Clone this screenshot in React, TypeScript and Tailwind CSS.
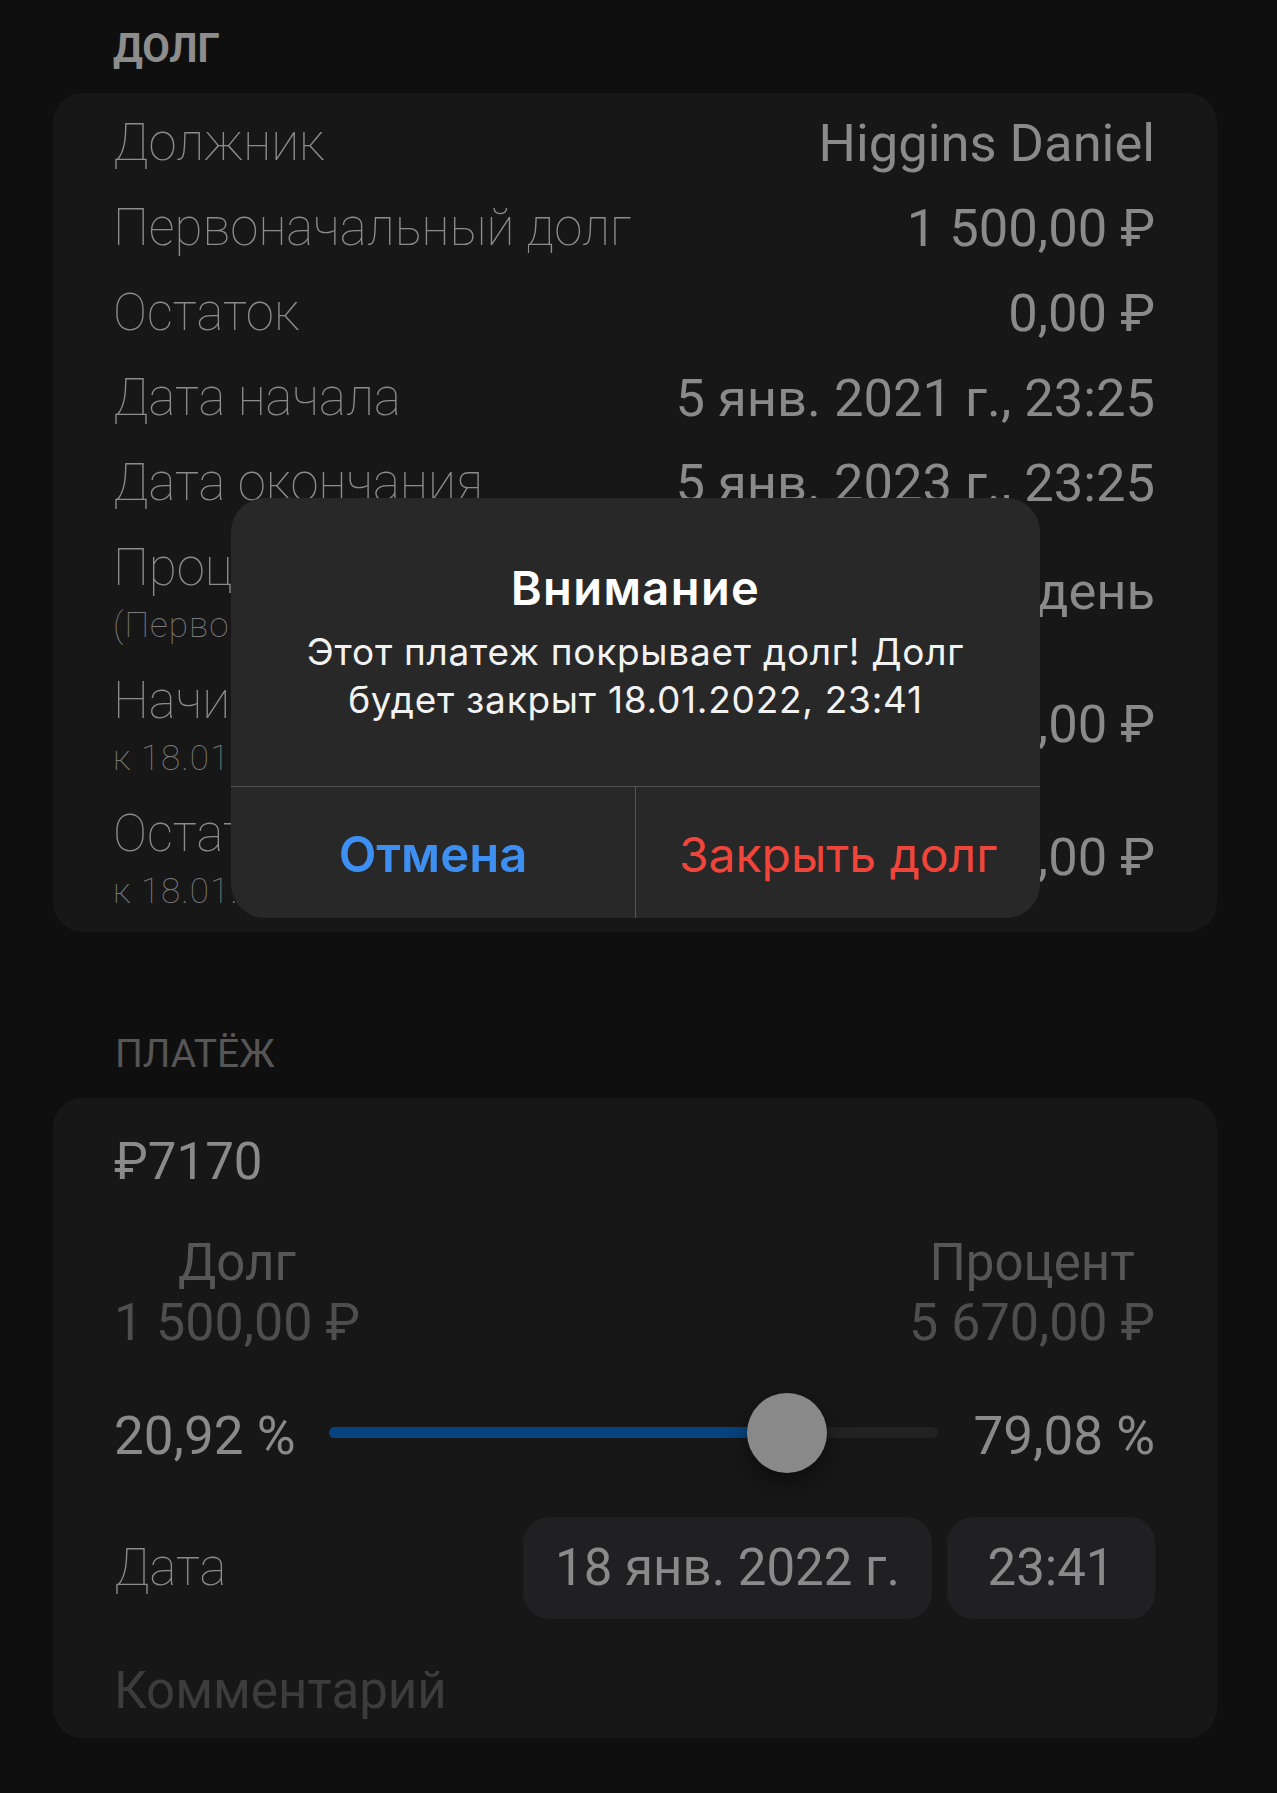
import React from "react";

const roboto = "font-['Roboto',sans-serif]";
const inter = "font-['Inter',sans-serif]";

function Row({ label, value }: { label: string; value: string }) {
  return (
    <div className="flex h-[85px] items-center justify-between">
      <span className="text-[51px] font-thin leading-[60px] text-[#8c8c8c]">{label}</span>
      <span className="text-[52.5px] leading-[60px] text-[#8a8a8a]">{value}</span>
    </div>
  );
}

function TwoLineRow({ label, hint, value }: { label: string; hint: string; value: string }) {
  return (
    <div className="flex items-center justify-between pt-[13px] pb-[4px]">
      <div className="flex flex-col">
        <span className="text-[51px] font-thin leading-[60px] text-[#8c8c8c]">{label}</span>
        <span className="text-[35px] font-thin leading-[56px] tracking-[0.03em] text-[#7c7c7c]">{hint}</span>
      </div>
      <span className="pb-[10px] text-[52.5px] leading-[60px] text-[#8a8a8a]">{value}</span>
    </div>
  );
}

function Slider({ value }: { value: number }) {
  // value in 0..1, thumb travels inside the track
  return (
    <div className="relative h-[80px] flex-1">
      <div className="absolute left-0 right-0 top-[34px] h-[11px] rounded-full bg-[#222222]" />
      <div
        className="absolute left-0 top-[34px] h-[11px] rounded-full bg-[#07437f]"
        style={{ width: `calc(40px + (100% - 80px) * ${value})` }}
      />
      <div
        className="absolute top-0 h-[80px] w-[80px] rounded-full bg-[#898989] shadow-[0_10px_24px_rgba(0,0,0,0.45)]"
        style={{ left: `calc((100% - 80px) * ${value})` }}
      />
    </div>
  );
}

export default function App() {
  return (
    <div className={`relative min-h-[1793px] w-full bg-[#0f0f0f] pt-[25px] ${roboto}`}>
      <div className="mx-[53px] w-[1164px]">
        <div className="mb-[20px] pl-[60px] text-[40px] font-bold leading-[48px] text-[#8d8d8d]">ДОЛГ</div>

        <section className="rounded-[30px] bg-[#171717] pt-[7px] pb-[8px] pl-[60px] pr-[62px]">
          <Row label="Должник" value="Higgins Daniel" />
          <Row label="Первоначальный долг" value="1 500,00 ₽" />
          <Row label="Остаток" value="0,00 ₽" />
          <Row label="Дата начала" value="5 янв. 2021 г., 23:25" />
          <Row label="Дата окончания" value="5 янв. 2023 г., 23:25" />
          <TwoLineRow label="Процентная ставка" hint="(Первоначальный долг)" value="0,7 % в день" />
          <TwoLineRow label="Начислено процентов" hint="к 18.01.2022, 23:41" value="5 670,00 ₽" />
          <TwoLineRow label="Остаток к оплате" hint="к 18.01.2022, 23:41" value="7 170,00 ₽" />
        </section>

        <div className="mt-[98px] mb-[20px] pl-[62px] text-[39px] leading-[48px] text-[#565656]">ПЛАТЁЖ</div>

        <section className="rounded-[30px] bg-[#171717] pt-[34px] pb-[17px] pl-[61px] pr-[62px]">
          <div className="text-[51px] leading-[60px] text-[#8a8a8a]">₽7170</div>

          <div className="mt-[40px] flex justify-between">
            <div className="flex flex-col items-center">
              <span className="text-[51px] leading-[61px] text-[#565656]">Долг</span>
              <span className="text-[52px] leading-[60px] text-[#4e4e4e]">1 500,00 ₽</span>
            </div>
            <div className="flex flex-col items-center">
              <span className="text-[51px] leading-[61px] text-[#565656]">Процент</span>
              <span className="text-[52px] leading-[60px] text-[#4e4e4e]">5 670,00 ₽</span>
            </div>
          </div>

          <div className="mt-[40px] flex h-[80px] items-center gap-[29px]">
            <span className="w-[186px] pt-[5px] text-[53px] leading-[60px] text-[#8a8a8a]">20,92 %</span>
            <Slider value={0.7908} />
            <span className="w-[188px] pt-[5px] text-right text-[53px] leading-[60px] text-[#8a8a8a]">79,08 %</span>
          </div>

          <div className="mt-[44px] flex items-center justify-between">
            <span className="text-[51px] font-thin leading-[60px] text-[#8c8c8c]">Дата</span>
            <div className="flex gap-[15px]">
              <div className="flex h-[102px] w-[409px] items-center justify-center rounded-[26px] bg-[#202022] text-[51px] text-[#8a8a8a]">
                18 янв. 2022 г.
              </div>
              <div className="flex h-[102px] w-[208px] items-center justify-center rounded-[26px] bg-[#202022] text-[51px] text-[#8a8a8a]">
                23:41
              </div>
            </div>
          </div>

          <div className="mt-[42px] text-[51px] leading-[60px] text-[#3c3c3c]">Комментарий</div>
        </section>
      </div>

      <div className={`absolute left-[231px] top-[498px] flex w-[809px] flex-col rounded-[34px] bg-[#282828] ${inter}`}>
        <div className="flex h-[288px] flex-col items-center px-[30px] pt-[63px] text-center">
          <div className="text-[47px] font-semibold leading-[54px] tracking-[0.03em] text-white">Внимание</div>
          <div className="mt-[13px] text-[37px] leading-[48px] tracking-[0.02em] text-[#f2f2f2]">
            Этот платеж покрывает долг! Долг
            <br />
            будет закрыт 18.01.2022, 23:41
          </div>
        </div>
        <div className="flex h-[132px] border-t border-[#545454]">
          <button className="flex flex-1 items-center justify-center pt-[5px] text-[49px] font-semibold text-[#3d8ff2]">
            Отмена
          </button>
          <div className="w-px bg-[#545454]" />
          <button className="flex flex-1 items-center justify-center pt-[5px] text-[48px] text-[#f0453a]">
            Закрыть долг
          </button>
        </div>
      </div>
    </div>
  );
}
